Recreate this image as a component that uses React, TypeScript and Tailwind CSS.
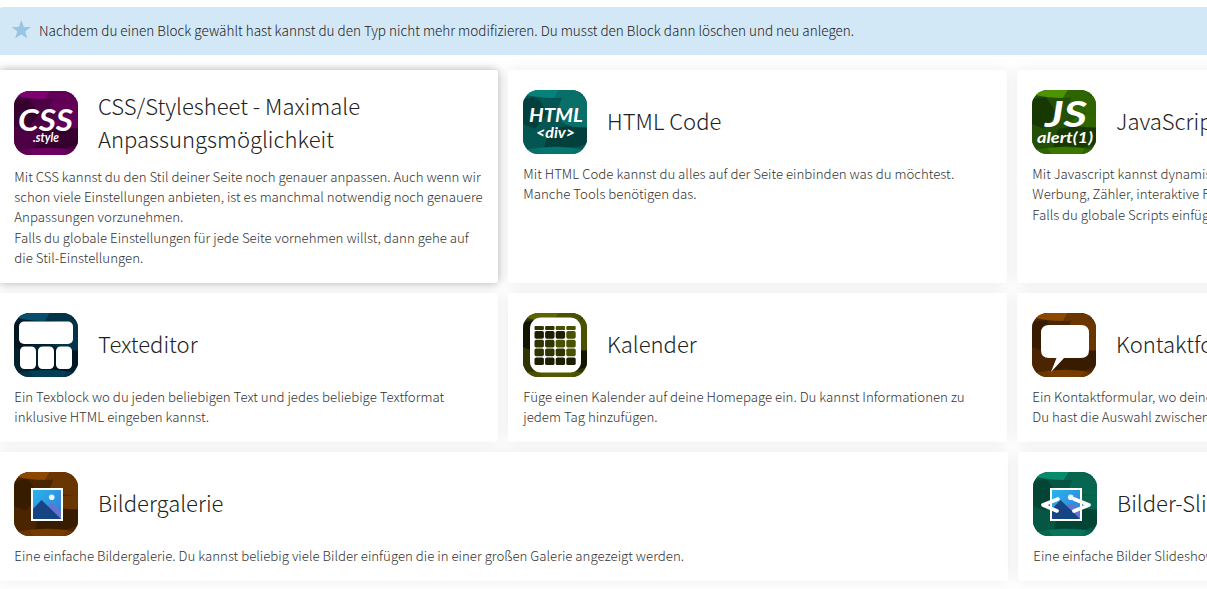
import type { ReactNode } from 'react';

type Tone = { base: string; dark: string; mid: string; light: string };

const purple: Tone = { base: '#4b0143', dark: '#36002f', mid: '#620058', light: '#7f0070' };
const teal: Tone = { base: '#055652', dark: '#03403d', mid: '#087069', light: '#05827b' };
const green: Tone = { base: '#235006', dark: '#173800', mid: '#2f6500', light: '#4b9300' };
const blue: Tone = { base: '#01202f', dark: '#001620', mid: '#033249', light: '#064e6c' };
const olive: Tone = { base: '#303400', dark: '#131500', mid: '#4a5100', light: '#5c6500' };
const brown: Tone = { base: '#4b2500', dark: '#381c00', mid: '#693500', light: '#8c4700' };
const jade: Tone = { base: '#055642', dark: '#034534', mid: '#07664f', light: '#068c6d' };

function Tile({ id, tone, children }: { id: string; tone: Tone; children: ReactNode }) {
  return (
    <svg className="block h-16 w-16 shrink-0" viewBox="0 0 64 64">
      <defs>
        <clipPath id={id}>
          <rect width="64" height="64" rx="15.5" />
        </clipPath>
      </defs>
      <g clipPath={`url(#${id})`}>
        <rect width="64" height="64" fill={tone.base} />
        <path d="M0 9L14 7L26 22L12 39L0 34Z" fill={tone.dark} />
        <path d="M14 7H40L35 18L24 22Z" fill={tone.base} />
        <path d="M40 6L35 18L46 22L64 24V6Z" fill={tone.mid} />
        <path d="M64 23L48 24L38 32L52 38L64 37Z" fill={tone.mid} />
        <path d="M0 44L12 38L22 52L17 60H0Z" fill={tone.base} />
        <path d="M26 39L42 36L64 38V54L50 58H21Z" fill={tone.dark} />
        <path d="M0 0H36L31 8Q14 8 0 4Z" fill={tone.light} />
        <path d="M36 0H64V4Q50 8 31 8Z" fill={tone.mid} />
        <path d="M0 60Q32 54 64 60V64H0Z" fill={tone.mid} />
        <path d="M15 58Q34 55 53 58L49 64H20Z" fill={tone.light} opacity=".4" />
      </g>
      {children}
    </svg>
  );
}

const script = "italic font-bold font-['Lato',sans-serif]";

function Landscape({ id }: { id: string }) {
  return (
    <g>
      <defs>
        <linearGradient id={id} x1="0" y1="0" x2="1" y2="1">
          <stop offset="0" stopColor="#27b5ed" />
          <stop offset="1" stopColor="#3878d7" />
        </linearGradient>
      </defs>
      <rect x="17" y="16" width="32" height="33" fill="#fff" />
      <rect x="19" y="18" width="28" height="29" fill={`url(#${id})`} />
      <path d="M31 37L38 31L47 40V47H31Z" fill="#6474cf" />
      <path d="M19 37L27.5 28L44 44L47 47H19Z" fill="#174583" />
      <circle cx="37.7" cy="25.2" r="2.8" fill="#e8f7ff" />
    </g>
  );
}

type CardProps = { icon: ReactNode; title: ReactNode; children: ReactNode; active?: boolean };

function Card({ icon, title, children, active = false }: CardProps) {
  return (
    <article
      className={`rounded-[3px] bg-white px-[15px] pt-5 ${
        active ? 'relative z-10 shadow-[0_0_10px_rgba(0,0,0,0.32)]' : 'shadow-[0_0_15px_rgba(0,0,0,0.08)]'
      }`}
    >
      <header className="flex items-center gap-5">
        {icon}
        <h2 className={`whitespace-nowrap text-[22.05px] font-light leading-[33px] text-[#222] ${active ? '-mt-px pb-px' : 'pb-1'}`}>
          {title}
        </h2>
      </header>
      <p className={`whitespace-nowrap pl-[0.3px] text-[13.26px] font-light leading-[20.25px] text-[#333] ${active ? 'mt-[10.8px]' : 'mt-[10px]'}`}>
        {children}
      </p>
    </article>
  );
}

export default function App() {
  return (
    <main className="h-[589px] w-full overflow-hidden bg-white pt-[7px] font-['Noto_Sans_CJK_SC','Noto_Sans',sans-serif]">
      <div className="flex h-12 items-center rounded-tl-[3px] bg-[#d3e8f7] pl-[11px]">
        <svg className="mb-0.5 h-5 w-5 shrink-0" viewBox="0 0 20 20" fill="#98c6e2">
          <path d="M10.3 0L12.8 7H20L14.2 11.5L16.4 18.5L10.3 14.4L4.1 18.5L6.3 11.5L.5 7H7.8Z" />
        </svg>
        <p className="ml-2 whitespace-nowrap pb-0.5 text-[13.5px] font-light leading-5 text-[#222]">
          Nachdem du einen Block gewählt hast kannst du den Typ nicht mehr modifizieren. Du musst den Block dann löschen und neu anlegen.
        </p>
      </div>

      <div className="-ml-px mt-[15px] grid w-[1518px] grid-cols-[499px_499px_499px] grid-rows-[213px_149px] gap-[10px]">
        <Card
          active
          title={<>CSS/Stylesheet - Maximale<br />Anpassungsmöglichkeit</>}
          icon={
            <Tile id="css" tone={purple}>
              <text x="4" y="39.5" textLength="55" lengthAdjust="spacingAndGlyphs" fill="#fff" className={`${script} text-[31px]`}>CSS</text>
              <text x="19" y="51" textLength="26" lengthAdjust="spacingAndGlyphs" fill="#fff" className={`${script} text-[12.5px]`}>.style</text>
            </Tile>
          }
        >
          Mit CSS kannst du den Stil deiner Seite noch genauer anpassen. Auch wenn wir<br />
          schon viele Einstellungen anbieten, ist es manchmal notwendig noch genauere<br />
          Anpassungen vorzunehmen.<br />
          Falls du globale Einstellungen für jede Seite vornehmen willst, dann gehe auf<br />
          die Stil-Einstellungen.
        </Card>

        <Card
          title="HTML Code"
          icon={
            <Tile id="html" tone={teal}>
              <text x="6" y="32" textLength="54" lengthAdjust="spacingAndGlyphs" fill="#fff" className={`${script} text-[18px]`}>HTML</text>
              <text x="13" y="47.5" textLength="39" lengthAdjust="spacingAndGlyphs" fill="#fff" className={`${script} text-[15px]`}>&lt;div&gt;</text>
            </Tile>
          }
        >
          Mit HTML Code kannst du alles auf der Seite einbinden was du möchtest.<br />
          Manche Tools benötigen das.
        </Card>

        <Card
          title="JavaScript"
          icon={
            <Tile id="js" tone={green}>
              <text x="13" y="36.5" textLength="42" lengthAdjust="spacingAndGlyphs" fill="#fff" className={`${script} text-[36px]`}>JS</text>
              <text x="5" y="53" textLength="56" lengthAdjust="spacingAndGlyphs" fill="#fff" className={`${script} text-[16px]`}>alert(1)</text>
            </Tile>
          }
        >
          Mit Javascript kannst dynamische Inhalte einbinden.<br />
          Werbung, Zähler, interaktive Formulare und mehr.<br />
          Falls du globale Scripts einfügen willst.
        </Card>

        <Card
          title="Texteditor"
          icon={
            <Tile id="editor" tone={blue}>
              <g fill="#fff">
                <rect x="5" y="8.5" width="54" height="22.5" rx="5" />
                <rect x="6" y="33.5" width="16" height="22.5" rx="4.5" />
                <rect x="24" y="33.5" width="16" height="22.5" rx="4.5" />
                <rect x="42" y="33.5" width="16" height="22.5" rx="4.5" />
              </g>
            </Tile>
          }
        >
          Ein Texblock wo du jeden beliebigen Text und jedes beliebige Textformat<br />
          inklusive HTML eingeben kannst.
        </Card>

        <Card
          title="Kalender"
          icon={
            <Tile id="calendar" tone={olive}>
              <rect x="7" y="4.5" width="51" height="55" rx="11" fill="#fff" />
              {[0, 1, 2, 3].map((column) => (
                <g key={column}>
                  <rect x={11.5 + column * 10.6} y="13" width="9.4" height="4" rx="1" fill={column > 1 ? olive.mid : olive.base} />
                  {[0, 1, 2, 3].map((row) => (
                    <rect
                      key={row}
                      x={11.5 + column * 10.6}
                      y={18 + row * 8.8}
                      width="9.4"
                      height="7.7"
                      rx="1.7"
                      fill={(column === 3 && row < 3) || (column === 2 && row === 1) ? olive.mid : row === 3 || row === 0 ? '#1c1e00' : olive.base}
                    />
                  ))}
                </g>
              ))}
            </Tile>
          }
        >
          Füge einen Kalender auf deine Homepage ein. Du kannst Informationen zu<br />
          jedem Tag hinzufügen.
        </Card>

        <Card
          title="Kontaktformular"
          icon={
            <Tile id="contact" tone={brown}>
              <path d="M17 12H49Q57 12 57 20V37Q57 45 49 45H32L19 59L24.5 45H17Q9 45 9 37V20Q9 12 17 12Z" fill="#fff" />
            </Tile>
          }
        >
          Ein Kontaktformular, wo deine Besucher dir schreiben.<br />
          Du hast die Auswahl zwischen mehreren Feldern.
        </Card>
      </div>

      <div className="-ml-px mt-[10px] grid w-[1518px] grid-cols-[1009px_499px] grid-rows-[129px] gap-[10px]">
        <Card
          title="Bildergalerie"
          icon={<Tile id="gallery" tone={brown}><Landscape id="gallery-sky" /></Tile>}
        >
          Eine einfache Bildergalerie. Du kannst beliebig viele Bilder einfügen die in einer großen Galerie angezeigt werden.
        </Card>
        <Card
          title="Bilder-Slideshow"
          icon={
            <Tile id="slides" tone={jade}>
              <Landscape id="slides-sky" />
              <path d="M25 27L10 33L24 39M41 27L56 33L41 39" fill="none" stroke="#fff" strokeWidth="3.6" strokeLinecap="round" strokeLinejoin="round" />
            </Tile>
          }
        >
          Eine einfache Bilder Slideshow für deine Seite.
        </Card>
      </div>
    </main>
  );
}
